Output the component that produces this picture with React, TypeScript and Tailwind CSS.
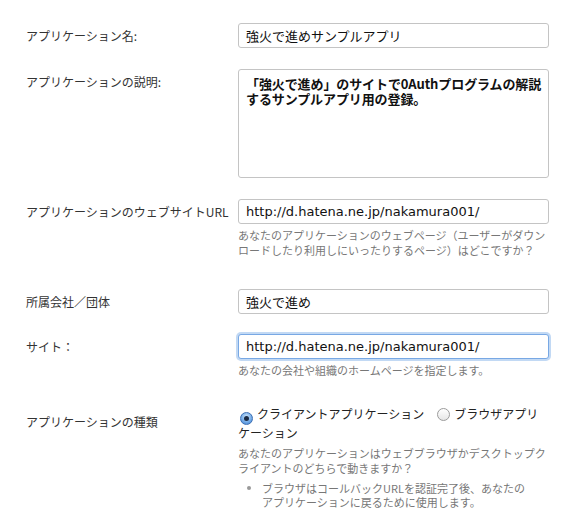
import React from 'react';

const inputCls =
  "block w-[311px] h-[25px] px-[7px] border border-[#c4c4c4] rounded-[3px] bg-white text-[13px] text-[#111] font-['DejaVu_Sans','Noto_Sans_CJK_JP',sans-serif] outline-none";

function Label({ children, pt = 'pt-[5px]' }: { children: React.ReactNode; pt?: string }) {
  return (
    <div className={`w-[238px] shrink-0 pl-[26px] text-[12px] leading-[16px] text-[#333] ${pt}`}>{children}</div>
  );
}

function Help({ children, cls = 'mt-[4px]' }: { children: React.ReactNode; cls?: string }) {
  return <p className={`${cls} text-[11px] leading-[15px] text-[#777]`}>{children}</p>;
}

function Radio({ checked }: { checked?: boolean }) {
  if (checked) {
    return (
      <span className="inline-flex items-center justify-center align-[-2px] w-[13px] h-[13px] rounded-full border border-[#3d6fb3] bg-[radial-gradient(circle_at_50%_35%,#cfe6fb,#6fa8e6_60%,#3f7fd0)] mr-[4px]">
        <span className="w-[5px] h-[5px] rounded-full bg-[#1a2a44]" />
      </span>
    );
  }
  return (
    <span className="inline-block align-[-2px] w-[13px] h-[13px] rounded-full border border-[#9b9b9b] bg-[linear-gradient(#ffffff,#e6e6e6)] mr-[4px]" />
  );
}

export default function App() {
  return (
    <div className="w-[574px] bg-white pt-[23px] font-['Noto_Sans_CJK_JP',sans-serif]">
      <div className="flex">
        <Label>アプリケーション名:</Label>
        <input className={inputCls} readOnly defaultValue="強火で進めサンプルアプリ" />
      </div>

      <div className="flex mt-[21px]">
        <Label>アプリケーションの説明:</Label>
        <textarea
          readOnly
          className="block w-[311px] h-[109px] pl-[7px] pr-[1px] pt-[6px] pb-[7px] border border-[#c4c4c4] rounded-[3px] bg-white text-[13px] leading-[15px] font-bold tracking-[-0.1px] text-[#111] resize-none outline-none"
          defaultValue={'「強火で進め」のサイトで0Authプログラムの解説\nするサンプルアプリ用の登録。'}
        />
      </div>

      <div className="flex mt-[21px]">
        <Label>アプリケーションのウェブサイトURL</Label>
        <div className="w-[311px]">
          <input className={inputCls} readOnly defaultValue="http://d.hatena.ne.jp/nakamura001/" />
          <Help>あなたのアプリケーションのウェブページ（ユーザーがダウンロードしたり利用しにいったりするページ）はどこですか？</Help>
        </div>
      </div>

      <div className="flex mt-[31px]">
        <Label>所属会社／団体</Label>
        <input className={inputCls} readOnly defaultValue="強火で進め" />
      </div>

      <div className="flex mt-[20px]">
        <Label>サイト：</Label>
        <div className="w-[311px]">
          <input
            className={`${inputCls} !border-[#78a8e4] shadow-[0_0_0_2px_rgba(120,170,230,0.45)]`}
            readOnly
            defaultValue="http://d.hatena.ne.jp/nakamura001/"
          />
          <Help>あなたの会社や組織のホームページを指定します。</Help>
        </div>
      </div>

      <div className="flex mt-[28px]">
        <Label pt="pt-[8px]">アプリケーションの種類</Label>
        <div className="w-[311px]">
          <div className="text-[12px] leading-[16px] text-[#222]">
            <span className="ml-[2px]">
              <Radio checked />
              クライアントアプリケーション
            </span>
            <span className="ml-[13px]">
              <Radio />
              ブラウザアプリ
            </span>
            <br />
            ケーション
          </div>
          <Help cls="mt-[5px]">あなたのアプリケーションはウェブブラウザかデスクトップクライアントのどちらで動きますか？</Help>
          <ul className="mt-[5px] text-[11px] leading-[14px] text-[#777]">
            <li className="flex">
              <span className="w-[24px] shrink-0 pl-[9px] pt-[5px]">
                <span className="block w-[4px] h-[4px] rounded-full bg-[#999]" />
              </span>
              <span>
                ブラウザはコールバックURLを認証完了後、あなたの
                <br />
                アプリケーションに戻るために使用します。
              </span>
            </li>
          </ul>
        </div>
      </div>
    </div>
  );
}
